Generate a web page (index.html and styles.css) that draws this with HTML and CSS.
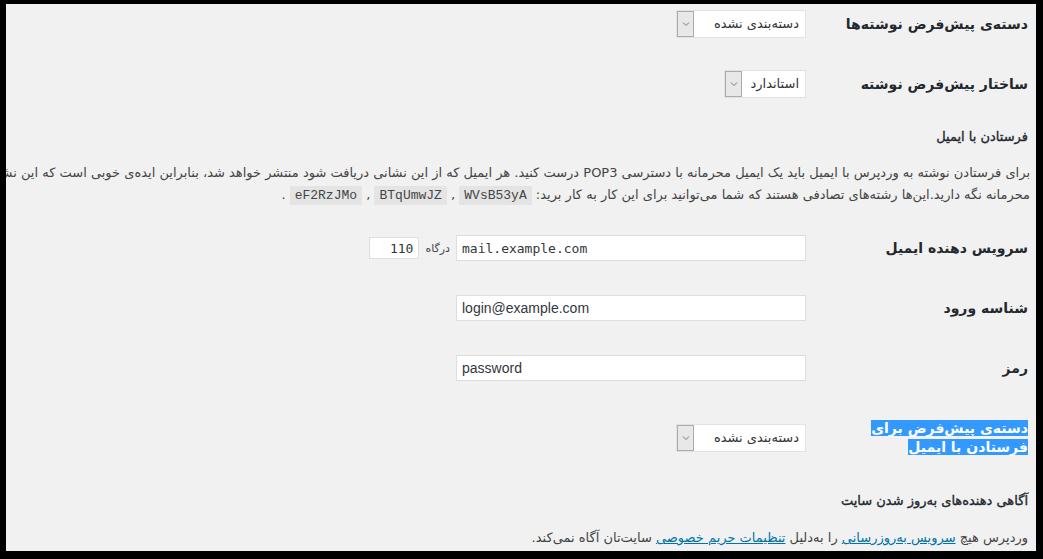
FILE: index.html
```html
<!DOCTYPE html>
<html lang="fa" dir="rtl">
<head>
  <meta charset="UTF-8" />
  <title>تنظیمات نوشتن</title>
  <link rel="stylesheet" href="styles.css">
</head>
<body>

  <div class="screen">
    <div class="content">

      <!-- Default category -->
      <div class="field first">
        <div class="label">دسته‌ی پیش‌فرض نوشته‌ها</div>
        <div class="control">
          <div class="select wide">
            <span class="value">دسته‌بندی نشده</span>
            <span class="arrow"><svg width="8" height="6" viewBox="0 0 8 6"><path d="M1 1.5 L4 4.5 L7 1.5" fill="none" stroke="#777" stroke-width="1"/></svg></span>
          </div>
        </div>
      </div>

      <!-- Default post format -->
      <div class="field format">
        <div class="label">ساختار پیش‌فرض نوشته</div>
        <div class="control">
          <div class="select">
            <span class="value">استاندارد</span>
            <span class="arrow"><svg width="8" height="6" viewBox="0 0 8 6"><path d="M1 1.5 L4 4.5 L7 1.5" fill="none" stroke="#777" stroke-width="1"/></svg></span>
          </div>
        </div>
      </div>

      <h2 class="title first-title">فرستادن با ایمیل</h2>
      <p class="intro">
        <span class="line">برای فرستادن نوشته به وردپرس با ایمیل باید یک ایمیل محرمانه با دسترسی POP3 درست کنید. هر ایمیل که از این نشانی دریافت شود منتشر خواهد شد، بنابراین ایده‌ی خوبی است که این نشانی را کاملاً</span>
        <span class="line">محرمانه نگه دارید.این‌ها رشته‌های تصادفی هستند که شما می‌توانید برای این کار به کار برید: <code>WVsB53yA</code> , <code>BTqUmwJZ</code> , <code>eF2RzJMo</code> .</span>
      </p>

      <div class="field mail">
        <div class="label">سرویس دهنده ایمیل</div>
        <div class="control">
          <input type="text" class="text mono" value="mail.example.com" dir="ltr" />
          <span class="port-label">درگاه</span>
          <input type="text" class="port" value="110" dir="ltr" />
        </div>
      </div>

      <div class="field login">
        <div class="label">شناسه ورود</div>
        <div class="control">
          <input type="text" class="text" value="login@example.com" dir="ltr" />
        </div>
      </div>

      <div class="field login">
        <div class="label">رمز</div>
        <div class="control">
          <input type="text" class="text" value="password" dir="ltr" />
        </div>
      </div>

      <div class="field category">
        <div class="label"><span class="picked">دسته‌ی پیش‌فرض برای<br>فرستادن با ایمیل</span></div>
        <div class="control">
          <div class="select wide">
            <span class="value">دسته‌بندی نشده</span>
            <span class="arrow"><svg width="8" height="6" viewBox="0 0 8 6"><path d="M1 1.5 L4 4.5 L7 1.5" fill="none" stroke="#777" stroke-width="1"/></svg></span>
          </div>
        </div>
      </div>

      <h2 class="title second-title">آگاهی دهنده‌های به‌روز شدن سایت</h2>
      <p class="notice">وردپرس هیچ <a href="#">سرویس به‌روزرسانی</a> را به‌دلیل <a href="#">تنظیمات حریم خصوصی</a> سایت‌تان آگاه نمی‌کند.</p>

    </div>
  </div>

</body>
</html>
```

FILE: styles.css
```css
* { box-sizing: border-box; margin: 0; padding: 0; }
body {
  background: #000;
  font-family: 'DejaVu Sans', sans-serif;
  color: #23282d;
}
.screen {
  width: 1043px;
  height: 559px;
  border-style: solid;
  border-color: #000;
  border-width: 4px 7px 8px 6px;
  background: #f1f1f1;
  overflow: hidden;
}
.content { padding: 6px 8px 0 0; }

/* option rows */
.field {
  display: flex;
  align-items: center;
  min-height: 28px;
}
.field .label {
  width: 210px;
  flex: none;
  font-size: 14px;
  font-weight: bold;
  line-height: 19px;
  padding-left: 10px;
}
.field .control {
  display: flex;
  align-items: center;
  padding-right: 12px;
}
.format { margin-top: 32px; }
.mail { margin-top: 28px; }
.login { margin-top: 32px; }
.category { margin-top: 37px; }

.picked {
  background: #3399ff;
  color: #fff;
}

/* fake selects */
.select {
  display: flex;
  align-items: stretch;
  height: 28px;
  width: 82px;
  background: #fff;
  border: 1px solid #e2e2e2;
}
.select.wide { width: 130px; }
.select .value {
  flex: 1;
  font-size: 13px;
  line-height: 26px;
  color: #333;
  padding-right: 6px;
  white-space: nowrap;
}
.select .arrow {
  width: 17px;
  background: #e8e8e8;
  border: 1px solid #ababab;
  display: flex;
  align-items: center;
  justify-content: center;
}

/* inputs */
input {
  height: 26px;
  border: 1px solid #dedede;
  background: #fff;
  color: #32373c;
  font-size: 14px;
  font-family: 'Liberation Sans', sans-serif;
  padding: 0 5px;
  outline: none;
}
input.text { width: 350px; }
input.mono { font-family: 'DejaVu Sans Mono', monospace; font-size: 13px; }
.port-label {
  font-size: 11px;
  color: #444;
  margin: 0 6px 0 6px;
}
input.port {
  width: 50px;
  height: 22px;
  text-align: right;
  font-family: 'DejaVu Sans Mono', monospace;
  font-size: 13px;
}

/* section headings and text */
.title {
  font-size: 13px;
  font-weight: normal;
  line-height: 20px;
  color: #23282d;
  -webkit-text-stroke: 0.35px #23282d;
}
.first-title { margin-top: 29px; }
.second-title { margin-top: 34px; }

.intro {
  margin: 15px -2px 0 0;
  font-size: 13px;
  color: #444;
  white-space: nowrap;
}
.intro .line {
  display: block;
  line-height: 22px;
}
code {
  display: inline-block;
  font-family: 'Liberation Mono', monospace;
  font-size: 13px;
  line-height: 19px;
  background: #e4e4e4;
  padding: 0 5px;
  color: #444;
}
.notice {
  margin-top: 17px;
  font-size: 13px;
  line-height: 20px;
  color: #444;
}
.notice a { color: #0073aa; }
```
